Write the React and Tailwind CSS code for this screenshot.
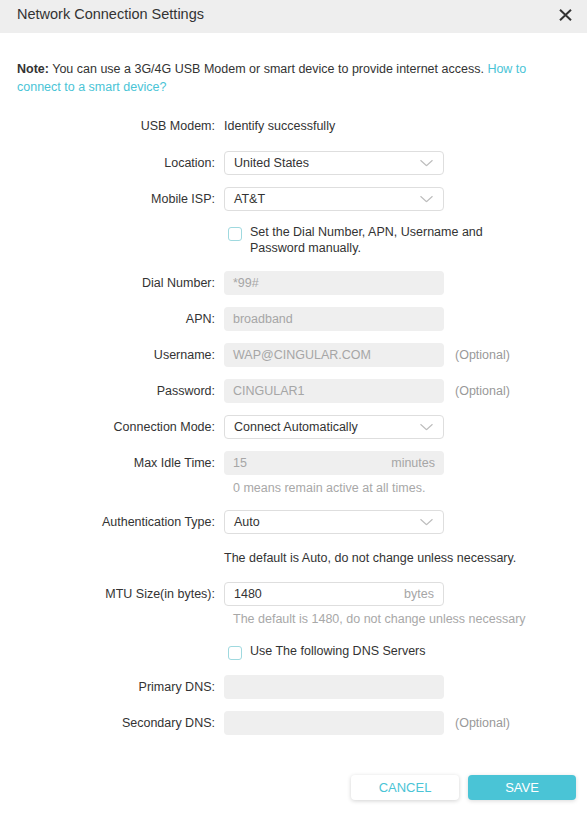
import React from "react";

const teal = "text-[#4ac4d6]";

function Chevron() {
  return (
    <svg width="13" height="7" viewBox="0 0 13 7" className="absolute right-[10px] top-1/2 -translate-y-1/2">
      <path d="M0.5 0.8 L6.5 6.2 L12.5 0.8" fill="none" stroke="#bdbdbd" strokeWidth="1.2" />
    </svg>
  );
}

function Row({ label, children, extra, className = "" }) {
  return (
    <div className={`flex h-[24px] items-center ${className}`}>
      <div className="w-[215px] shrink-0 text-right text-[#333]">{label}</div>
      <div className="ml-[9px] flex items-center">
        {children}
        {extra && <span className="ml-[11px] text-[#999]">{extra}</span>}
      </div>
    </div>
  );
}

function Select({ value }) {
  return (
    <div className="relative flex h-[24px] w-[220px] items-center rounded-[4px] border border-[#dedede] bg-white pl-[9px] text-[#333]">
      {value}
      <Chevron />
    </div>
  );
}

function Field({ value, unit, disabled }) {
  return (
    <div
      className={`flex h-[24px] w-[220px] items-center justify-between rounded-[4px] pl-[9px] pr-[9px] ${
        disabled ? "bg-[#efefef] text-[#a6a6a6]" : "border border-[#dedede] bg-white text-[#333]"
      }`}
    >
      <span>{value}</span>
      {unit && <span className="text-[#a6a6a6]">{unit}</span>}
    </div>
  );
}

function Check({ children, className = "" }) {
  return (
    <div className={`flex ${className}`}>
      <div className="w-[215px] shrink-0" />
      <div className="ml-[13px] flex items-start">
        <span className="mt-[3px] block size-[14px] shrink-0 rounded-[3px] border border-[#9fd9df] bg-white" />
        <span className="ml-[8px] w-[245px] leading-[16px] text-[#333]">{children}</span>
      </div>
    </div>
  );
}

function Hint({ children, dark, className = "" }) {
  return (
    <div className={`flex h-[16px] items-center ${className}`}>
      <div className="w-[215px] shrink-0" />
      <div className={`whitespace-nowrap ${dark ? "ml-[9px] text-[#333]" : "ml-[18px] text-[#a8a8a8]"}`}>
        {children}
      </div>
    </div>
  );
}

export default function App() {
  return (
    <div className="min-h-[821px] w-full bg-white text-[12.5px] [font-family:'Liberation_Sans',Arial,sans-serif]">
      <div className="flex h-[33px] items-center justify-between bg-[#eeeeee] pl-[17px] pr-[15px]">
        <h1 className="mb-[3px] text-[14.5px] text-[#333]">Network Connection Settings</h1>
        <svg width="13" height="12" viewBox="0 0 13 12" className="mb-[3px]">
          <path d="M1 0.8 L12 11.2 M12 0.8 L1 11.2" stroke="#333" strokeWidth="2" />
        </svg>
      </div>

      {/* help link is split so each line is its own box */}
      <div className="mt-[27px] px-[17px] leading-[18px] text-[#333]">
        <div className="whitespace-nowrap">
          <b className="font-bold">Note:</b>
          <span> You can use a 3G/4G USB Modem or smart device to provide internet access. </span>
          <span className={teal}>How to</span>
        </div>
        <div className={teal}>connect to a smart device?</div>
      </div>

      <div className="flex flex-col">
        <Row label="USB Modem:" className="mt-[18px]">
          <span className="text-[#333]">Identify successfully</span>
        </Row>
        <Row label="Location:" className="mt-[13px]">
          <Select value="United States" />
        </Row>
        <Row label="Mobile ISP:" className="mt-[12px]">
          <Select value="AT&T" />
        </Row>
        <Check className="mt-[13px] h-[32px]">Set the Dial Number, APN, Username and Password manually.</Check>
        <Row label="Dial Number:" className="mt-[15px]">
          <Field value="*99#" disabled />
        </Row>
        <Row label="APN:" className="mt-[12px]">
          <Field value="broadband" disabled />
        </Row>
        <Row label="Username:" extra="(Optional)" className="mt-[12px]">
          <Field value="WAP@CINGULAR.COM" disabled />
        </Row>
        <Row label="Password:" extra="(Optional)" className="mt-[12px]">
          <Field value="CINGULAR1" disabled />
        </Row>
        <Row label="Connection Mode:" className="mt-[12px]">
          <Select value="Connect Automatically" />
        </Row>
        <Row label="Max Idle Time:" className="mt-[12px]">
          <Field value="15" unit="minutes" disabled />
        </Row>
        <Hint className="mt-[5px]">0 means remain active at all times.</Hint>
        <Row label="Authentication Type:" className="mt-[14px]">
          <Select value="Auto" />
        </Row>
        <Hint dark className="mt-[16px]">The default is Auto, do not change unless necessary.</Hint>
        <Row label="MTU Size(in bytes):" className="mt-[16px]">
          <Field value="1480" unit="bytes" />
        </Row>
        <Hint className="mt-[5px]">The default is 1480, do not change unless necessary</Hint>
        <Check className="mt-[16px] h-[22px]">Use The following DNS Servers</Check>
        <Row label="Primary DNS:" className="mt-[10px]">
          <Field value="" disabled />
        </Row>
        <Row label="Secondary DNS:" extra="(Optional)" className="mt-[12px]">
          <Field value="" disabled />
        </Row>
      </div>

      <div className="mt-[40px] flex justify-end gap-[9px] pr-[11px]">
        <button
          type="button"
          className={`h-[25px] w-[108px] rounded-[4px] bg-white text-[13px] shadow-[0_1px_4px_rgba(0,0,0,0.18)] ${teal}`}
        >
          CANCEL
        </button>
        <button
          type="button"
          className="h-[25px] w-[108px] rounded-[4px] bg-[#4ac4d6] text-[13px] text-white shadow-[0_1px_4px_rgba(0,0,0,0.15)]"
        >
          SAVE
        </button>
      </div>
    </div>
  );
}
